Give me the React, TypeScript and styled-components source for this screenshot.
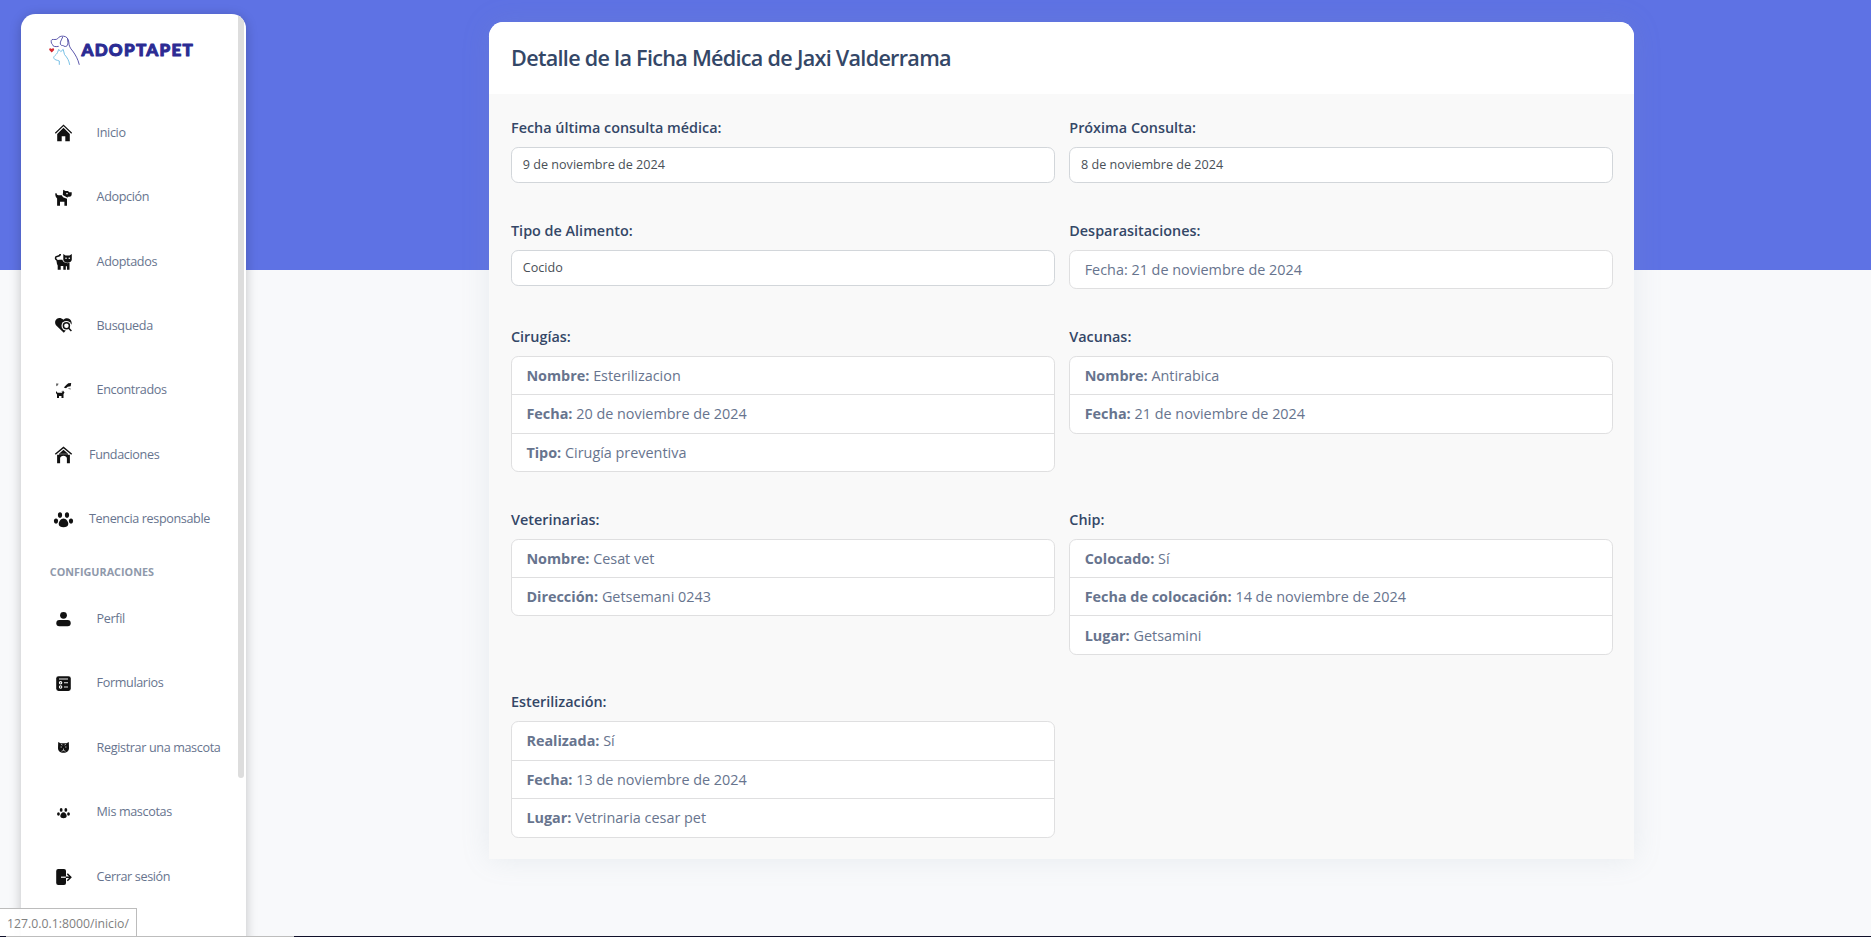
import React from "react";
import styled, { createGlobalStyle } from "styled-components";

const GlobalStyle = createGlobalStyle`
  html { font-size: 14.4px; }
  *, *::before, *::after { box-sizing: border-box; }
  body {
    margin: 0;
    overflow: hidden;
    font-family: "Open Sans", "Noto Sans", sans-serif;
    color: #67748e;
    line-height: 1.6;
  }
`;

const Page = styled.div`
  position: relative;
  display: flex;
  align-items: flex-start;
  height: 937px;
  overflow: hidden;
  background: linear-gradient(#5e72e4 270px, #f8f9fb 270px);
`;

const Sidebar = styled.aside`
  flex: none;
  width: 225px;
  height: 940px;
  margin: 14px 0 0 21px;
  background: #fff;
  border-radius: 1rem;
  box-shadow: 0 2px 12px rgba(0, 0, 0, 0.22);
`;

const SidebarScroll = styled.div`
  position: relative;
  height: 100%;
  overflow: hidden;
  border-radius: inherit;
`;

const ScrollThumb = styled.div`
  position: absolute;
  top: 0;
  right: 2px;
  width: 6px;
  height: 764px;
  background: #ddd;
  border-radius: 0 0 3px 3px;
`;

const Brand = styled.a`
  display: flex;
  height: 86.6px;
  padding: 20px 0 0 27px;
`;

const NavList = styled.ul`
  list-style: none;
  margin: 0;
  padding: 0;
`;

const NavItem = styled.li<{ $tight?: boolean }>`
  display: flex;
  align-items: center;
  gap: ${(p) => (p.$tight ? 12 : 19.6)}px;
  height: 64.4px;
  padding: 0 0 0 29px;
  font-size: 12.6px;
  letter-spacing: -0.36px;
  white-space: nowrap;
  font-weight: 400;
`;

const NavIcon = styled.svg`
  flex: none;
  width: 27px;
  height: 24px;
  margin-top: 1px;
  fill: #111;
`;

const NavHeading = styled.h6`
  height: 35.5px;
  margin: 0;
  padding: 12px 0 0 28.8px;
  font-size: 10.8px;
  font-weight: 700;
  line-height: 18px;
  text-transform: uppercase;
  color: #8f99ab;
`;

const Card = styled.main`
  flex: none;
  width: 1144.6px;
  margin: 22px 0 0 243.2px;
  border-radius: 1rem 1rem 0 0;
  background: #f9f9f9;
  box-shadow: 0 0 2rem rgba(136, 152, 170, 0.15);
`;

const CardHeader = styled.header`
  height: 72px;
  padding: 18px 21.9px 0;
  background: #fff;
  border-radius: 1rem 1rem 0 0;
`;

const Title = styled.h4`
  margin: 0;
  font-size: 1.5rem;
  font-weight: 600;
  line-height: 36px;
  letter-spacing: -0.71px;
  color: #344767;
`;

const CardBody = styled.div`
  display: grid;
  grid-template-columns: 1fr 1fr;
  align-items: start;
  column-gap: 1rem;
  row-gap: 35.7px;
  padding: 22.2px 20.6px 21.4px 21.8px;
`;

const Label = styled.div`
  margin-bottom: 7.8px;
  font-size: 1rem;
  font-weight: 600;
  color: #344767;
`;

const Control = styled.div`
  height: 36.2px;
  padding: 0.47rem 0.75rem 0;
  border: 1px solid #d2d6da;
  border-radius: 0.5rem;
  background: #fff;
  color: #495057;
  font-size: 0.875rem;
  line-height: 1.4rem;
`;

const List = styled.ul`
  list-style: none;
  margin: 0;
  padding: 0;
  border: 1px solid #dfdfe0;
  border-radius: 0.5rem;
  background: #fff;
`;

const ListItem = styled.li`
  padding: 0.5rem 1rem;
  font-size: 1rem;
  & + & {
    border-top: 1px solid #dfdfe0;
  }
  b {
    font-weight: 700;
  }
`;

const StatusBar = styled.div`
  position: absolute;
  left: 0;
  bottom: 0;
  width: 137px;
  height: 29px;
  padding: 5px 0 0 7px;
  border: solid #bcbcbc;
  border-width: 1px 1px 0 0;
  background: rgba(255, 255, 255, 0.93);
  color: #808080;
  font-size: 12.25px;
  line-height: 20px;
  white-space: nowrap;
`;

const BottomEdge = styled.div`
  position: absolute;
  left: 0;
  right: 0;
  bottom: 0;
  height: 1px;
  background: linear-gradient(90deg, #10102a 6px, #bdbdbd 6px, #bdbdbd 294px, #10102a 294px);
`;

const Logo = () => (
  <svg width="148" height="34" viewBox="0 0 148 34" fill="none">
    <g stroke="#4b46a3" strokeWidth="0.9" strokeLinecap="round" strokeLinejoin="round">
      <path d="M10.3 12.4C7 13 4.700 12.400 4.500 10.600C3 9.500 2.700 6 4 5.600C6 5.200 8 6 9.500 4.800C11 2.500 13 2 15.500 2.200C18.500 2.400 20.400 4.500 20.800 8C21 12 22 14 24.700 17C27.500 21 30 25 31.200 30.400" />
      <path d="M14.600 3.300C13.500 6 11.500 8.500 12.500 10.500C13.300 12 15.300 11 16 12.200C19.500 13.500 20.700 10 19.500 5.500" />
    </g>
    <g stroke="#69b9e2" strokeWidth="0.9" strokeLinecap="round" strokeLinejoin="round">
      <path d="M11.300 30.400V27C9 26 6.500 26 6 24.400C4.500 22.500 9 20.500 9.500 18.500L10.700 15.400L12.800 17.600L15.200 15.400L16.500 20.500C19.500 24 21 26.500 21.600 30.500" />
    </g>
    <path fill="#d42a33" d="M3.700 18.600L1.500 16.300C.4 14.500 2.500 13.500 3.700 15.100C5 13.500 7 14.700 5.800 16.500Z" />
    <text
      x="33.400"
      y="21.500"
      textLength="111.400"
      lengthAdjust="spacing"
      fill="#2b2b93"
      stroke="#2b2b93"
      strokeWidth="1"
      strokeLinejoin="round"
      fontFamily="Lato, sans-serif"
      fontWeight="900"
      fontSize="17"
    >
      ADOPTAPET
    </text>
  </svg>
);

/* Glyphs share a 27 x 24 box centred on (13.5, 12). */
const paw = (
  <>
    <ellipse cx="10" cy="7" rx="2.100" ry="2.800" />
    <ellipse cx="17" cy="7" rx="2.100" ry="2.800" />
    <ellipse cx="6" cy="13.100" rx="2.100" ry="2.700" />
    <ellipse cx="21" cy="13.100" rx="2.100" ry="2.700" />
    <path d="M13.500 10.500C16 10.500 18.300 13.500 18.300 16C18.300 18.300 16 19.300 13.500 19.300S8.700 18.300 8.700 16C8.700 13.500 11 10.500 13.500 10.500Z" />
  </>
);

const icons: Record<string, React.ReactNode> = {
  home: (
    <>
      <path d="M5.300 12.300L13.500 4.300L21.700 12.300" fill="none" stroke="#111" strokeWidth="1.200" />
      <path d="M13.500 6.700L19.800 13V20.200H15.300V15.200H11.700V20.200H7.200V13Z" />
    </>
  ),
  dog: (
    <>
      <path d="M5.200 7.500L6.400 7C6.700 8.600 7.300 9.200 8.500 9.200H11.800L13 11.200L17 12.700V19.800H14.400V15.800H10V19.800H7.100V12.500C5.900 11.500 5.200 9.500 5.200 7.500Z" />
      <path d="M13.200 3.800L15.500 5H18L19.200 6.200H21.700V8.300C21.700 10 20.700 10.800 19.200 10.800H17.700V11.700L12.800 9Z" />
      <circle cx="17" cy="7.600" r=".8" fill="#fff" />
    </>
  ),
  cat: (
    <>
      <path d="M7.200 9.800C5 9.800 4.900 6.900 6.900 6.500C8.900 6.300 10.300 6.200 10.300 4.100" fill="none" stroke="#111" strokeWidth="1.500" />
      <path d="M6.200 9.600C7.500 10.300 9 9.700 12.300 9.800C13.200 12.200 15.500 13.600 19.500 13V19.800H17V16.300H15.800V19.800H13.300V16H10.700V19.800H7.700V15.500L7 14Z" />
      <path d="M13.300 3.900L15.500 5.500H19.500L21.800 3.900V9.500C21.800 11.500 20 12.700 17.600 12.700S13.300 11.500 13.300 9.500Z" />
      <circle cx="16" cy="8.300" r=".8" fill="#fff" />
      <circle cx="19.300" cy="8.300" r=".8" fill="#fff" />
    </>
  ),
  search: (
    <>
      <path d="M13.500 5.800C16.500 3 20.800 4.500 21.600 8.300V10L13.800 18.700L7 12.300C2 7.500 8 .8 13.500 5.800Z" />
      <path d="M16.400 11.800L20.500 16" stroke="#fff" strokeWidth="4" />
      <circle cx="16.400" cy="11.800" r="4.900" fill="#fff" />
      <circle cx="16.400" cy="11.800" r="3" fill="none" stroke="#111" strokeWidth="1.500" />
      <path d="M18.500 14L21.400 17" stroke="#111" strokeWidth="1.500" />
    </>
  ),
  found: (
    <>
      <path d="M6 12L7.500 13.700H12L12.800 11.800L14.500 13.300L13.500 15.300V19H11.500V17H9V19H7V15.500L6 14Z" />
      <path d="M13.800 8.500L16.500 5.800L18.300 4.200L21.200 4L20.700 7.200L17.700 7.700L16 9.200Z" />
      <path d="M6 4.500H8.500L8 6.300L6.300 7.200Z" opacity=".65" />
      <path d="M18.500 9.500L20.800 10" stroke="#111" strokeWidth=".8" opacity=".7" />
      <path d="M11 12.500L14 12" stroke="#111" strokeWidth=".5" opacity=".4" />
    </>
  ),
  shelter: (
    <>
      <path d="M5.300 11.300L13.500 4.400L21.700 11.300" fill="none" stroke="#111" strokeWidth="1.500" />
      <path d="M13.500 6.800L18 10.700H9Z" />
      <path d="M7.100 11.800H19.900V20.200H16.900V15.500C16.900 11.900 10.100 11.900 10.100 15.500V20.200H7.100Z" />
      <path d="M9 10.700H18V12H9Z" opacity=".75" />
    </>
  ),
  paw,
  pawSmall: <g transform="translate(4.450 4.200) scale(.67)">{paw}</g>,
  user: (
    <>
      <circle cx="13.500" cy="7.300" r="3.400" />
      <rect x="6.300" y="12" width="14.400" height="6.300" rx="3" />
    </>
  ),
  form: (
    <>
      <rect x="6.200" y="4.300" width="14.600" height="14.600" rx="2.300" />
      <path d="M9 7H18M14 10.800H18M14 15H18" stroke="#eee" strokeWidth="1.100" />
      <circle cx="10.600" cy="10.800" r="1.200" fill="none" stroke="#fff" strokeWidth="1.100" />
      <circle cx="10.600" cy="15" r="1.200" fill="none" stroke="#fff" strokeWidth="1.100" />
    </>
  ),
  face: (
    <>
      <path d="M8.200 6L10.500 7.200H16.500L18.800 6L19 12C19 15 17 16.800 13.500 16.800S8 15 8 12Z" />
      <path d="M11 8.300L12.500 9M16 8.300L14.500 9M10.500 11H12M15 11H16.500M13.500 12.500V14.500M11.500 15.300L13.500 14.300L15.500 15.300" stroke="#ddd" strokeWidth=".7" fill="none" />
    </>
  ),
  exit: (
    <>
      <rect x="6.200" y="4" width="9.800" height="16" rx="2" />
      <path d="M11 12.200H16" stroke="#fff" strokeWidth="1.200" />
      <path d="M15.800 12.200H20.800M17.300 8.700L20.800 12.200L17.300 15.700" stroke="#111" strokeWidth="1.500" fill="none" />
    </>
  ),
};

type Nav = { icon: string; text: string; tight?: boolean };

const mainNav: Nav[] = [
  { icon: "home", text: "Inicio" },
  { icon: "dog", text: "Adopción" },
  { icon: "cat", text: "Adoptados" },
  { icon: "search", text: "Busqueda" },
  { icon: "found", text: "Encontrados" },
  { icon: "shelter", text: "Fundaciones", tight: true },
  { icon: "paw", text: "Tenencia responsable", tight: true },
];

const settingsNav: Nav[] = [
  { icon: "user", text: "Perfil" },
  { icon: "form", text: "Formularios" },
  { icon: "face", text: "Registrar una mascota" },
  { icon: "pawSmall", text: "Mis mascotas" },
  { icon: "exit", text: "Cerrar sesión" },
];

const NavGroup = ({ items }: { items: Nav[] }) => (
  <NavList>
    {items.map((item) => (
      <NavItem key={item.text} $tight={item.tight}>
        <NavIcon viewBox="0 0 27 24">{icons[item.icon]}</NavIcon>
        <span>{item.text}</span>
      </NavItem>
    ))}
  </NavList>
);

type Field = { label: string; value?: string; rows?: [string, string][] };

const fields: Field[] = [
  { label: "Fecha última consulta médica:", value: "9 de noviembre de 2024" },
  { label: "Próxima Consulta:", value: "8 de noviembre de 2024" },
  { label: "Tipo de Alimento:", value: "Cocido" },
  { label: "Desparasitaciones:", rows: [["", "Fecha: 21 de noviembre de 2024"]] },
  {
    label: "Cirugías:",
    rows: [
      ["Nombre:", "Esterilizacion"],
      ["Fecha:", "20 de noviembre de 2024"],
      ["Tipo:", "Cirugía preventiva"],
    ],
  },
  {
    label: "Vacunas:",
    rows: [
      ["Nombre:", "Antirabica"],
      ["Fecha:", "21 de noviembre de 2024"],
    ],
  },
  {
    label: "Veterinarias:",
    rows: [
      ["Nombre:", "Cesat vet"],
      ["Dirección:", "Getsemani 0243"],
    ],
  },
  {
    label: "Chip:",
    rows: [
      ["Colocado:", "Sí"],
      ["Fecha de colocación:", "14 de noviembre de 2024"],
      ["Lugar:", "Getsamini"],
    ],
  },
  {
    label: "Esterilización:",
    rows: [
      ["Realizada:", "Sí"],
      ["Fecha:", "13 de noviembre de 2024"],
      ["Lugar:", "Vetrinaria cesar pet"],
    ],
  },
];

export default function App() {
  return (
    <Page>
      <GlobalStyle />
      <Sidebar>
        <SidebarScroll>
          <Brand>
            <Logo />
          </Brand>
          <NavGroup items={mainNav} />
          <NavHeading>Configuraciones</NavHeading>
          <NavGroup items={settingsNav} />
          <ScrollThumb />
        </SidebarScroll>
      </Sidebar>
      <Card>
        <CardHeader>
          <Title>Detalle de la Ficha Médica de Jaxi Valderrama</Title>
        </CardHeader>
        <CardBody>
          {fields.map((field) => (
            <section key={field.label}>
              <Label>{field.label}</Label>
              {field.value && <Control>{field.value}</Control>}
              {field.rows && (
                <List>
                  {field.rows.map(([name, value]) => (
                    <ListItem key={name}>
                      {name && <b>{name}</b>} {value}
                    </ListItem>
                  ))}
                </List>
              )}
            </section>
          ))}
        </CardBody>
      </Card>
      <StatusBar>127.0.0.1:8000/inicio/</StatusBar>
      <BottomEdge />
    </Page>
  );
}
